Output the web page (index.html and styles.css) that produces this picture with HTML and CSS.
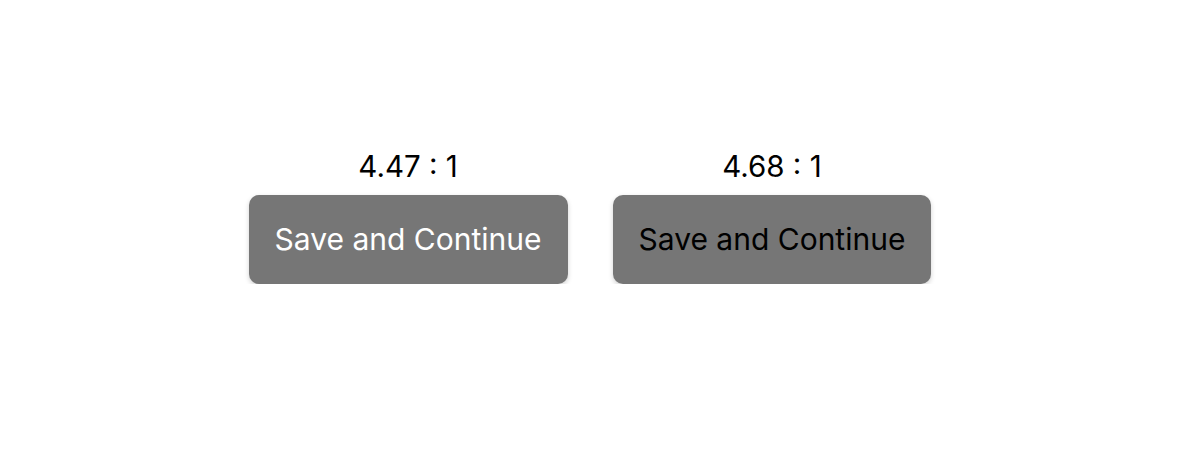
FILE: index.html
```html
<!DOCTYPE html>
<html>
<head>
<meta charset="utf-8">
<link rel="stylesheet" href="styles.css">
</head>
<body>
<div class="row">
  <div class="item">
    <div class="ratio">4.47 : 1</div>
    <button class="btn btn-light">Save and Continue</button>
  </div>
  <div class="item">
    <div class="ratio">4.68 : 1</div>
    <button class="btn btn-dark">Save and Continue</button>
  </div>
</div>
</body>
</html>
```
FILE: styles.css
```css
html, body {
  margin: 0;
  padding: 0;
  background: #ffffff;
  font-family: Inter, "Noto Sans", sans-serif;
}
.row {
  display: flex;
  justify-content: center;
  gap: 45px;
  padding-top: 148px;
  padding-right: 20px;
}
.item {
  display: flex;
  flex-direction: column;
  align-items: center;
  gap: 11px;
}
.ratio {
  font-size: 29.5px;
  font-weight: 400;
  line-height: 36px;
  color: #000;
}
.btn {
  border: none;
  background: #767676;
  border-radius: 10px;
  font-family: Inter, "Noto Sans", sans-serif;
  font-size: 30px;
  line-height: 36px;
  padding: 26px 26px 27px;
  box-shadow: 0 2px 5px rgba(0,0,0,0.18);
}
.btn-light { color: #ffffff; }
.btn-dark { color: #000000; }
```
